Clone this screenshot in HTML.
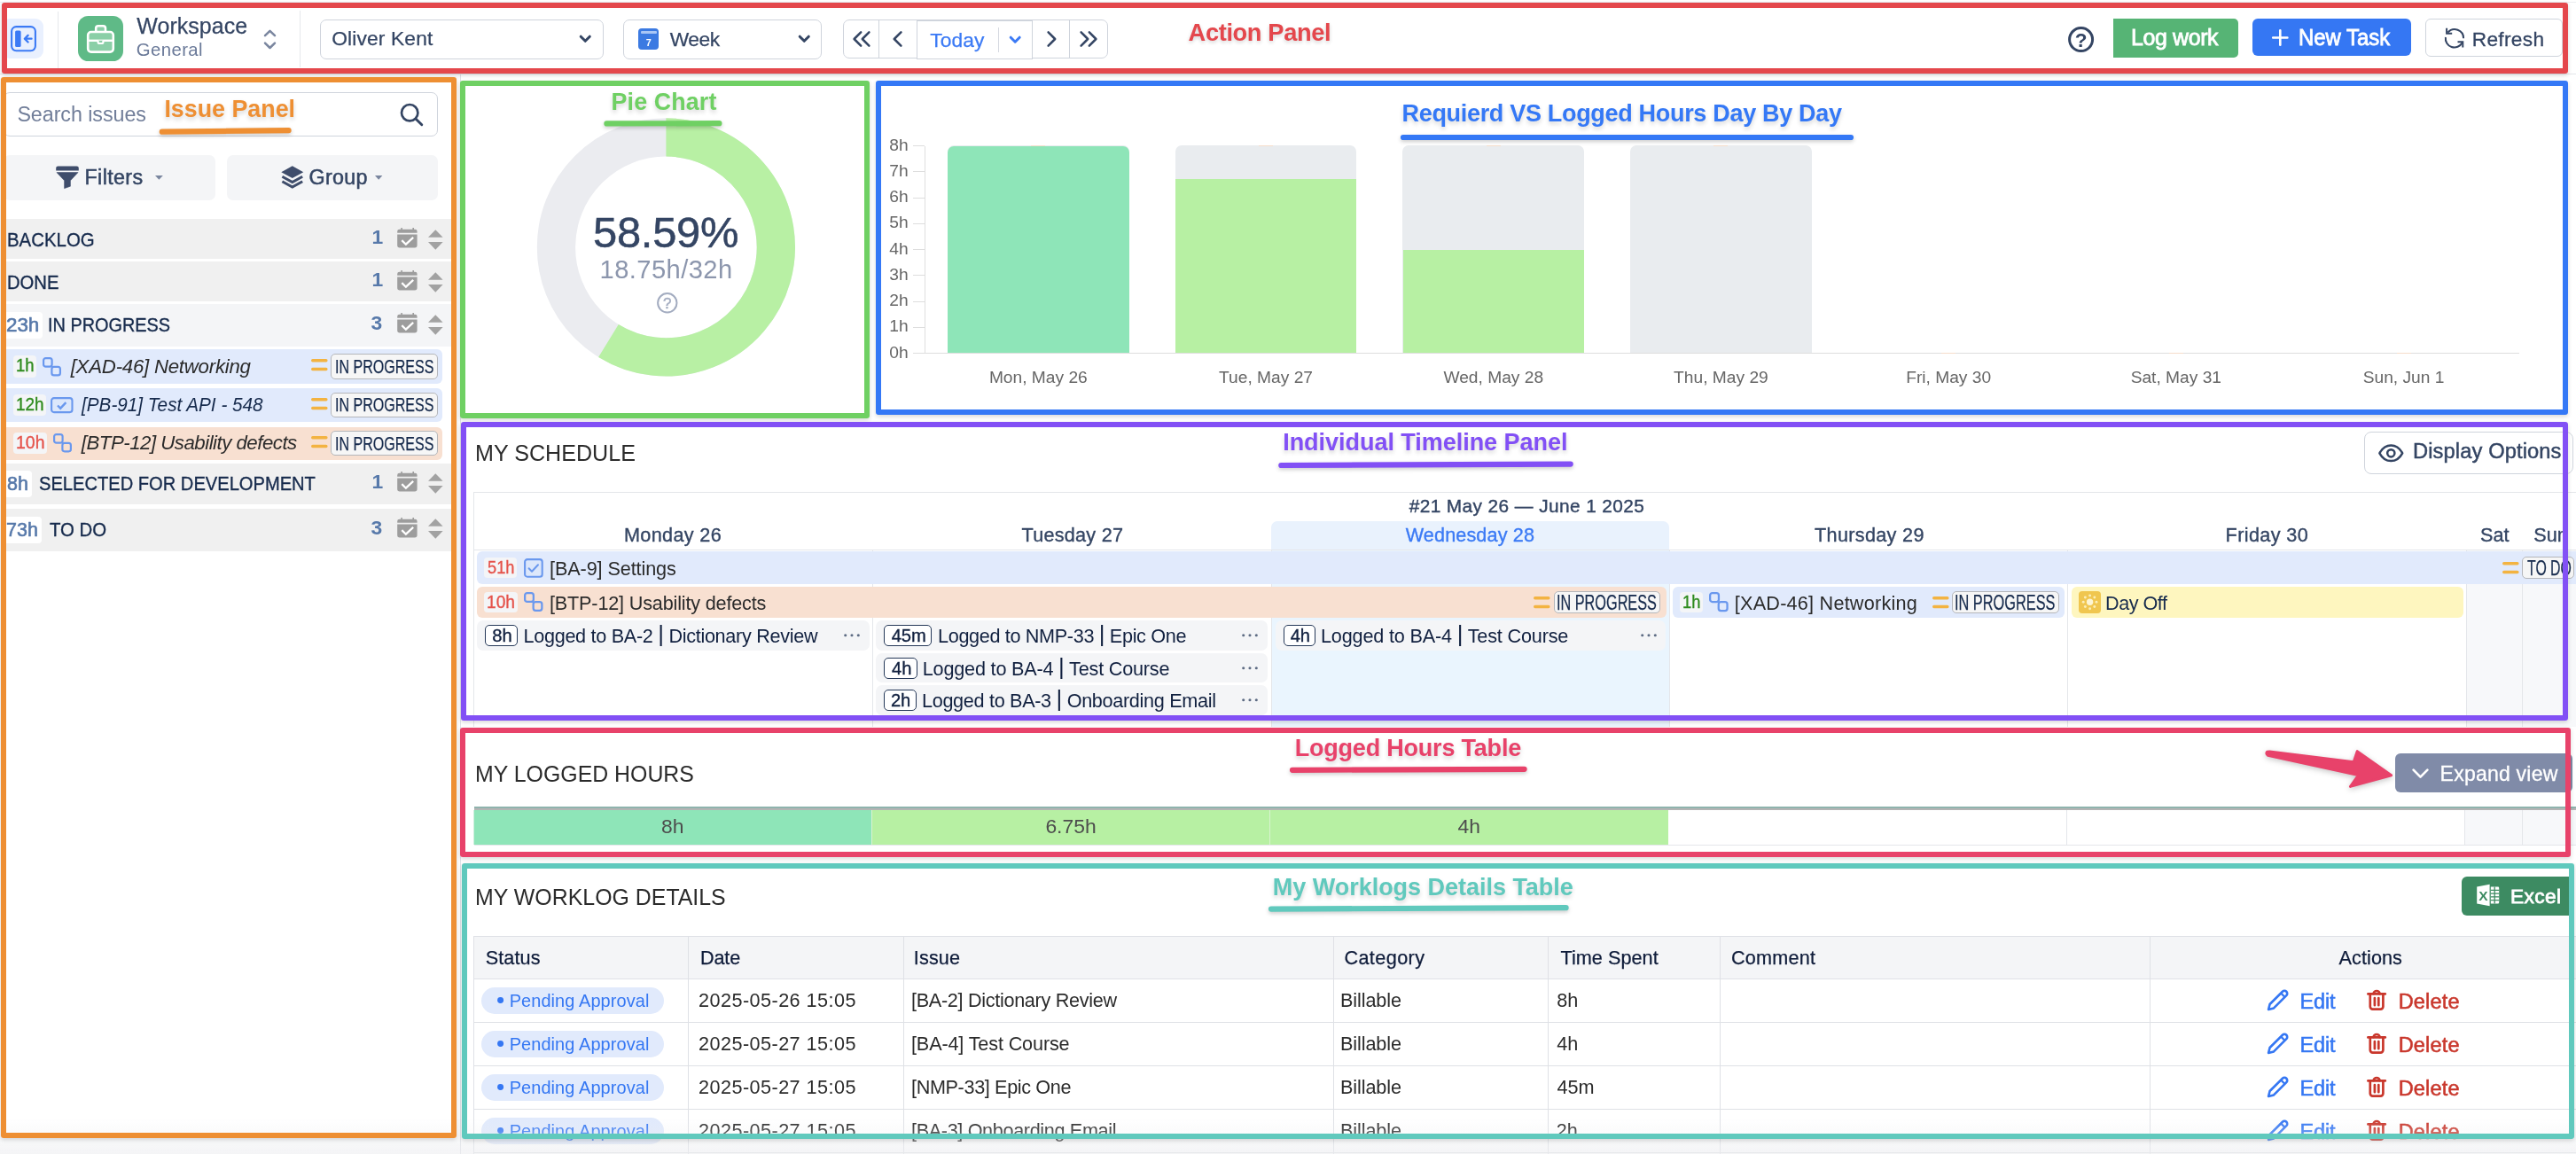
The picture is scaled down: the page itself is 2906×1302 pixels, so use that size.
<!DOCTYPE html>
<html lang="en"><head><meta charset="utf-8"><title>Workspace - Individual View</title>
<style>
html,body{margin:0;padding:0;background:#fff;}
body{width:2906px;height:1302px;position:relative;overflow:hidden;font-family:"Liberation Sans",sans-serif;}
.a{position:absolute;box-sizing:border-box;}
.t{position:absolute;white-space:pre;font-kerning:normal;}
.pp{font-size:1.2em;line-height:0;position:relative;top:-0.02em;}
svg{overflow:visible;}
svg text{font-family:"Liberation Sans",sans-serif;}
#pg{position:absolute;left:0;top:0;width:2906px;height:1302px;overflow:hidden;will-change:transform;}
</style></head><body><div id="pg">
<div class="a" style="left:0px;top:83px;width:2906px;height:1px;background:#e4e6ea;"></div>
<div class="a" style="left:519px;top:84px;width:1px;height:1218px;background:#e1e3e8;"></div>
<div class="a" style="left:0px;top:2px;width:2906px;height:1px;background:#eceef1;"></div>
<div class="a" style="left:2px;top:20.7px;width:46.9px;height:45px;background:#e9f0fe;border-radius:9px;"></div>
<svg class="a" style="left:12px;top:28.6px;" width="29" height="29.3" viewBox="0 0 29 29.3"><rect x="1.1" y="1.1" width="26.8" height="27.1" rx="5.2" fill="none" stroke="#3b7af5" stroke-width="2.1"/><rect x="5.1" y="5.4" width="6.5" height="18.6" rx="1.6" fill="#3b7af5"/><path d="M23.6 14.7H16.2M19.6 10.9l-3.8 3.8 3.8 3.8" stroke="#3b7af5" stroke-width="2.3" fill="none" stroke-linecap="round" stroke-linejoin="round"/></svg>
<div class="a" style="left:65px;top:13px;width:1px;height:64px;background:#e6e8ec;"></div>
<div class="a" style="left:87.9px;top:17.9px;width:51px;height:51px;background:#5fba87;border-radius:11.5px;"></div>
<svg class="a" style="left:87.9px;top:17.9px;" width="51" height="51" viewBox="0 0 51 51"><path d="M20.2 18v-4.2a2.6 2.6 0 0 1 2.6-2.6h5.6a2.6 2.6 0 0 1 2.6 2.6V18" fill="#8acfa7" stroke="#fff" stroke-width="2.6"/><rect x="11.2" y="18" width="28.6" height="22.6" rx="3.6" fill="#8acfa7" stroke="#fff" stroke-width="2.6"/><path d="M11.2 27.8h28.6" stroke="#fff" stroke-width="2.4"/><path d="M22.6 27.8v1.6a1.6 1.6 0 0 0 1.6 1.6h2.6a1.6 1.6 0 0 0 1.6-1.6v-1.6" fill="#8acfa7" stroke="#fff" stroke-width="2.2"/></svg>
<span class="t" style="left:154.3px;letter-spacing:0.066px;top:16.77px;font-size:24.96px;line-height:24.96px;color:#344563;-webkit-text-stroke:0.25px #344563;">Workspace</span>
<span class="t" style="left:153.7px;letter-spacing:0.415px;top:46.34px;font-size:20.38px;line-height:20.38px;color:#6b7a99;">General</span>
<svg class="a" style="left:297px;top:32px;" width="15" height="24" viewBox="0 0 15 24"><path d="M2 8.2L7.5 2.8 13 8.2M2 16.6l5.5 5.4 5.5-5.4" fill="none" stroke="#7a869f" stroke-width="2.5" stroke-linecap="round" stroke-linejoin="round"/></svg>
<div class="a" style="left:338px;top:12px;width:1px;height:64px;background:#e6e8ec;"></div>
<div class="a" style="left:361px;top:22.3px;width:319.6px;height:44.3px;background:#fff;border-radius:7px;border:1px solid #cfd4dc;"></div>
<span class="t" style="left:374.2px;letter-spacing:0.152px;top:32.32px;font-size:22.78px;line-height:22.78px;color:#344563;-webkit-text-stroke:0.25px #344563;">Oliver Kent</span>
<svg class="a" style="left:654.3px;top:40.2px;" width="12.5" height="7.5" viewBox="0 0 12.5 7.5"><path d="M1.2 1.2L6.25 6.3L11.3 1.2" fill="none" stroke="#344563" stroke-width="3" stroke-linecap="round" stroke-linejoin="round"/></svg>
<div class="a" style="left:703px;top:22.3px;width:223.5px;height:44.3px;background:#fff;border-radius:7px;border:1px solid #cfd4dc;"></div>
<div class="a" style="left:720px;top:31.8px;width:23.4px;height:23.9px;background:#3b7ae2;border-radius:4px;"></div>
<div class="a" style="left:722.6px;top:34.6px;width:18.2px;height:3.4px;background:#a9c6f5;border-radius:1px;"></div>
<span class="t" style="left:728.69px;top:43.24px;font-size:10.82px;line-height:10.82px;color:#fff;font-weight:700;">7</span>
<span class="t" style="left:755.8px;letter-spacing:-0.499px;top:33.12px;font-size:22.78px;line-height:22.78px;color:#344563;-webkit-text-stroke:0.25px #344563;">Week</span>
<svg class="a" style="left:900.5px;top:40.2px;" width="12.5" height="7.5" viewBox="0 0 12.5 7.5"><path d="M1.2 1.2L6.25 6.3L11.3 1.2" fill="none" stroke="#344563" stroke-width="3" stroke-linecap="round" stroke-linejoin="round"/></svg>
<div class="a" style="left:950.5px;top:22.3px;width:299.1px;height:44.2px;background:#fff;border-radius:7px;border:1px solid #cfd4dc;"></div>
<div class="a" style="left:1034px;top:22.8px;width:131px;height:44.7px;background:#fff;border:1px solid #cfd4dc;"></div>
<div class="a" style="left:991.2px;top:22.3px;width:1px;height:44.2px;background:#cfd4dc;"></div>
<div class="a" style="left:1206px;top:22.3px;width:1px;height:44.2px;background:#cfd4dc;"></div>
<svg class="a" style="left:962px;top:34.5px;" width="20" height="18" viewBox="0 0 20 18"><path d="M9.2 1.4L1.6 9l7.6 7.6M18.4 1.4L10.8 9l7.6 7.6" fill="none" stroke="#344563" stroke-width="2.5" stroke-linecap="round" stroke-linejoin="round"/></svg>
<svg class="a" style="left:1007px;top:34.5px;" width="11" height="18" viewBox="0 0 11 18"><path d="M9.4 1.4L1.8 9l7.6 7.6" fill="none" stroke="#344563" stroke-width="2.5" stroke-linecap="round" stroke-linejoin="round"/></svg>
<svg class="a" style="left:1180.5px;top:34.5px;" width="11" height="18" viewBox="0 0 11 18"><path d="M1.6 1.4L9.2 9l-7.6 7.6" fill="none" stroke="#344563" stroke-width="2.5" stroke-linecap="round" stroke-linejoin="round"/></svg>
<svg class="a" style="left:1217.6px;top:34.5px;" width="20" height="18" viewBox="0 0 20 18"><path d="M1.6 1.4L9.2 9l-7.6 7.6M10.8 1.4L18.4 9l-7.6 7.6" fill="none" stroke="#344563" stroke-width="2.5" stroke-linecap="round" stroke-linejoin="round"/></svg>
<span class="t" style="left:1049.2px;letter-spacing:0.109px;top:33.62px;font-size:22.78px;line-height:22.78px;color:#3b7af5;-webkit-text-stroke:0.25px #3b7af5;">Today</span>
<div class="a" style="left:1126px;top:30.5px;width:1px;height:28px;background:#d5d9e0;"></div>
<svg class="a" style="left:1138.8px;top:41.3px;" width="12.4" height="7.4" viewBox="0 0 12.4 7.4"><path d="M1.2 1.2L6.2 6.2L11.200000000000001 1.2" fill="none" stroke="#3b7af5" stroke-width="3" stroke-linecap="round" stroke-linejoin="round"/></svg>
<svg class="a" style="left:2333px;top:29.8px;" width="29.2" height="29.2" viewBox="0 0 29.2 29.2"><circle cx="14.6" cy="14.6" r="13" fill="none" stroke="#344563" stroke-width="3"/><text x="14.6" y="22.6" text-anchor="middle" font-size="22.5" font-weight="700" fill="#344563">?</text></svg>
<div class="a" style="left:2384.1px;top:20.9px;width:140.6px;height:43.7px;background:#56b475;border-radius:0 5px 5px 0;"></div>
<span class="t" style="left:2404px;letter-spacing:-0.382px;top:29.87px;font-size:24.96px;line-height:24.96px;color:#fff;-webkit-text-stroke:0.8px #fff;">Log work</span>
<div class="a" style="left:2541.1px;top:20.9px;width:178.6px;height:41.9px;background:#3577f3;border-radius:6px;"></div>
<svg class="a" style="left:2563px;top:33.4px;" width="18.6" height="19" viewBox="0 0 18.6 19"><path d="M9.3 1.2v16.6M1.2 9.5h16.2" stroke="#fff" stroke-width="2.6" stroke-linecap="round"/></svg>
<span class="t" style="left:2593.38px;transform-origin:0 50%;transform:scaleX(0.9589);top:29.87px;font-size:24.96px;line-height:24.96px;color:#fff;-webkit-text-stroke:0.8px #fff;">New Task</span>
<div class="a" style="left:2736.3px;top:20.9px;width:154.6px;height:43px;background:#fff;border-radius:6px;border:1px solid #cfd4dc;"></div>
<svg class="a" style="left:2757.7px;top:31.4px;" width="22.4" height="23" viewBox="0 0 22.4 23"><g fill="none" stroke="#344563" stroke-width="2" stroke-linejoin="miter"><path d="M3.4 5.7A10 10 0 0 1 21.1 12.2"/><path d="M0.9 11A10 10 0 0 0 19.6 17.2"/><path d="M2.1 0.7v6.1h6.1"/><path d="M14.5 16.3h5.800v6.2"/></g></svg>
<span class="t" style="left:2788.7px;letter-spacing:0.328px;top:32.81px;font-size:22.67px;line-height:22.67px;color:#344563;-webkit-text-stroke:0.3px #344563;">Refresh</span>
<span class="t" style="left:1340.6px;letter-spacing:-0.370px;top:23.23px;font-size:27.25px;line-height:27.25px;color:#e4474c;font-weight:700;text-shadow:0 2px 4px rgba(0,0,0,.18);">Action Panel</span>
<div class="a" style="left:4px;top:104.3px;width:489.8px;height:49.4px;background:#fff;border-radius:7px;border:1px solid #cfd4dc;"></div>
<span class="t" style="left:19.4px;letter-spacing:-0.064px;top:117.58px;font-size:23.3px;line-height:23.3px;color:#717e99;">Search issues</span>
<svg class="a" style="left:451px;top:115.8px;" width="26.5" height="26.5" viewBox="0 0 26.5 26.5"><circle cx="11.2" cy="11.2" r="9.2" fill="none" stroke="#344563" stroke-width="2.7"/><path d="M18.2 18.2l6.6 6.6" stroke="#344563" stroke-width="2.9" stroke-linecap="round"/></svg>
<div class="a" style="left:4px;top:175.1px;width:238.8px;height:50.5px;background:#f4f5f7;border-radius:7px;"></div>
<div class="a" style="left:256px;top:175.1px;width:238px;height:50.5px;background:#f4f5f7;border-radius:7px;"></div>
<svg class="a" style="left:63px;top:186.8px;" width="26" height="25.8" viewBox="0 0 26 25.8"><path d="M2.4 0.4h21.2a2.2 2.2 0 0 1 2.2 2.2v3H0.2v-3A2.2 2.2 0 0 1 2.4 0.4z" fill="#3f4d6b"/><path d="M1 7.6h24l-8.6 9.2v6.4l-6.8 2.4v-8.8z" fill="#3f4d6b" stroke="#3f4d6b" stroke-width="0.6" stroke-linejoin="round"/></svg>
<span class="t" style="left:95.5px;letter-spacing:0.372px;top:189.08px;font-size:23.3px;line-height:23.3px;color:#344563;-webkit-text-stroke:0.5px #344563;">Filters</span>
<svg class="a" style="left:175.2px;top:197.9px;" width="8.8" height="4.8" viewBox="0 0 8.8 4.8"><path d="M0 0h8.8L4.4 4.8z" fill="#7a869f"/></svg>
<svg class="a" style="left:316.5px;top:187.2px;" width="25.6" height="25.8" viewBox="0 0 25.6 25.8"><path d="M12.8 0.3L25.3 7.2 12.8 14.1 0.3 7.2z" fill="#3f4d6b"/><path d="M1.4 12.2l11.4 6.300 11.400-6.300M1.400 17.800l11.400 6.300 11.400-6.300" fill="none" stroke="#3f4d6b" stroke-width="3" stroke-linejoin="miter"/></svg>
<span class="t" style="left:348.6px;letter-spacing:0.252px;top:189.08px;font-size:23.3px;line-height:23.3px;color:#344563;-webkit-text-stroke:0.5px #344563;">Group</span>
<svg class="a" style="left:422.9px;top:197.9px;" width="8.4" height="4.8" viewBox="0 0 8.4 4.8"><path d="M0 0h8.4L4.2 4.8z" fill="#7a869f"/></svg>
<div class="a" style="left:4px;top:246.8px;width:505px;height:45px;background:#f0f0f0;"></div>
<span class="t" style="left:7.56px;transform-origin:0 50%;transform:scaleX(0.9432);top:259.73px;font-size:21.63px;line-height:21.63px;color:#172b4d;-webkit-text-stroke:0.35px #172b4d;">BACKLOG</span>
<span class="t" style="left:419.53px;top:256.4px;font-size:22.88px;line-height:22.88px;color:#5779aa;font-weight:700;">1</span>
<svg class="a" style="left:448.3px;top:257.4px;" width="22.8" height="22.6" viewBox="0 0 22.8 22.6"><rect x="4.3" y="0" width="1.6" height="3" fill="#9d9d9d"/><rect x="17.4" y="0" width="1.6" height="3" fill="#9d9d9d"/><path d="M2.6 1.7h17.6a2.4 2.4 0 0 1 2.4 2.4v1.6H0.2V4.1a2.4 2.4 0 0 1 2.4-2.4z" fill="#9d9d9d"/><path d="M0.2 7.500h22.4v12.300a2.700 2.700 0 0 1-2.700 2.700H2.900a2.700 2.700 0 0 1-2.700-2.700z" fill="#9d9d9d"/><path d="M5.300 14.100l4.600 4.600 8.300-7.800" fill="none" stroke="#fff" stroke-width="2.300" stroke-linecap="butt" stroke-linejoin="miter"/></svg>
<svg class="a" style="left:482.5px;top:259.2px;" width="16.6" height="23.1" viewBox="0 0 16.6 22.6"><path d="M8.3 0L16.6 8.6H0z" fill="#a2a2a2"/><path d="M0 13.8h16.6L8.3 22.6z" fill="#a2a2a2"/></svg>
<div class="a" style="left:4px;top:294.8px;width:505px;height:44.8px;background:#f0f0f0;"></div>
<span class="t" style="left:7.56px;transform-origin:0 50%;transform:scaleX(0.9352);top:307.63px;font-size:21.63px;line-height:21.63px;color:#172b4d;-webkit-text-stroke:0.35px #172b4d;">DONE</span>
<span class="t" style="left:419.53px;top:304.3px;font-size:22.88px;line-height:22.88px;color:#5779aa;font-weight:700;">1</span>
<svg class="a" style="left:448.3px;top:305.4px;" width="22.8" height="22.6" viewBox="0 0 22.8 22.6"><rect x="4.3" y="0" width="1.6" height="3" fill="#9d9d9d"/><rect x="17.4" y="0" width="1.6" height="3" fill="#9d9d9d"/><path d="M2.6 1.7h17.6a2.4 2.4 0 0 1 2.4 2.4v1.6H0.2V4.1a2.4 2.4 0 0 1 2.4-2.4z" fill="#9d9d9d"/><path d="M0.2 7.500h22.4v12.300a2.700 2.700 0 0 1-2.700 2.700H2.900a2.700 2.700 0 0 1-2.700-2.700z" fill="#9d9d9d"/><path d="M5.300 14.100l4.600 4.600 8.300-7.800" fill="none" stroke="#fff" stroke-width="2.300" stroke-linecap="butt" stroke-linejoin="miter"/></svg>
<svg class="a" style="left:482.5px;top:307.2px;" width="16.6" height="23.1" viewBox="0 0 16.6 22.6"><path d="M8.3 0L16.6 8.6H0z" fill="#a2a2a2"/><path d="M0 13.8h16.6L8.3 22.6z" fill="#a2a2a2"/></svg>
<div class="a" style="left:4px;top:343.2px;width:505px;height:48px;background:#f4f5f7;"></div>
<div class="a" style="left:4px;top:352.2px;width:44px;height:30px;background:#fff;border-radius:4px;"></div>
<span class="t" style="left:7.17px;transform-origin:0 50%;transform:scaleX(1.0337);top:356.33px;font-size:21.63px;line-height:21.63px;color:#5779aa;-webkit-text-stroke:0.6px #5779aa;">23h</span>
<span class="t" style="left:54.46px;transform-origin:0 50%;transform:scaleX(0.9196);top:356.43px;font-size:21.63px;line-height:21.63px;color:#172b4d;-webkit-text-stroke:0.35px #172b4d;">IN PROGRESS</span>
<span class="t" style="left:418.53px;top:353.1px;font-size:22.88px;line-height:22.88px;color:#5779aa;font-weight:700;">3</span>
<svg class="a" style="left:448.3px;top:352.8px;" width="22.8" height="22.6" viewBox="0 0 22.8 22.6"><rect x="4.3" y="0" width="1.6" height="3" fill="#9d9d9d"/><rect x="17.4" y="0" width="1.6" height="3" fill="#9d9d9d"/><path d="M2.6 1.7h17.6a2.4 2.4 0 0 1 2.4 2.4v1.6H0.2V4.1a2.4 2.4 0 0 1 2.4-2.4z" fill="#9d9d9d"/><path d="M0.2 7.500h22.4v12.300a2.700 2.700 0 0 1-2.700 2.700H2.900a2.700 2.700 0 0 1-2.700-2.700z" fill="#9d9d9d"/><path d="M5.300 14.100l4.600 4.600 8.300-7.800" fill="none" stroke="#fff" stroke-width="2.300" stroke-linecap="butt" stroke-linejoin="miter"/></svg>
<svg class="a" style="left:482.5px;top:354.6px;" width="16.6" height="23.1" viewBox="0 0 16.6 22.6"><path d="M8.3 0L16.6 8.6H0z" fill="#a2a2a2"/><path d="M0 13.8h16.6L8.3 22.6z" fill="#a2a2a2"/></svg>
<div class="a" style="left:4px;top:522.5px;width:505px;height:46.9px;background:#f0f0f0;"></div>
<div class="a" style="left:4px;top:530.95px;width:31.7px;height:30px;background:#fff;border-radius:4px;"></div>
<span class="t" style="left:8.2px;transform-origin:0 50%;transform:scaleX(0.9945);top:535.08px;font-size:21.63px;line-height:21.63px;color:#5779aa;-webkit-text-stroke:0.6px #5779aa;">8h</span>
<span class="t" style="left:44.3px;transform-origin:0 50%;transform:scaleX(0.9303);top:535.18px;font-size:21.63px;line-height:21.63px;color:#172b4d;-webkit-text-stroke:0.35px #172b4d;">SELECTED FOR DEVELOPMENT</span>
<span class="t" style="left:419.53px;top:531.85px;font-size:22.88px;line-height:22.88px;color:#5779aa;font-weight:700;">1</span>
<svg class="a" style="left:448.3px;top:532.1px;" width="22.8" height="22.6" viewBox="0 0 22.8 22.6"><rect x="4.3" y="0" width="1.6" height="3" fill="#9d9d9d"/><rect x="17.4" y="0" width="1.6" height="3" fill="#9d9d9d"/><path d="M2.6 1.7h17.6a2.4 2.4 0 0 1 2.4 2.4v1.6H0.2V4.1a2.4 2.4 0 0 1 2.4-2.4z" fill="#9d9d9d"/><path d="M0.2 7.500h22.4v12.300a2.700 2.700 0 0 1-2.700 2.700H2.900a2.700 2.700 0 0 1-2.700-2.700z" fill="#9d9d9d"/><path d="M5.300 14.100l4.600 4.600 8.300-7.800" fill="none" stroke="#fff" stroke-width="2.300" stroke-linecap="butt" stroke-linejoin="miter"/></svg>
<svg class="a" style="left:482.5px;top:533.9px;" width="16.6" height="23.1" viewBox="0 0 16.6 22.6"><path d="M8.3 0L16.6 8.6H0z" fill="#a2a2a2"/><path d="M0 13.8h16.6L8.3 22.6z" fill="#a2a2a2"/></svg>
<div class="a" style="left:4px;top:574px;width:505px;height:47.7px;background:#f0f0f0;"></div>
<div class="a" style="left:4px;top:582.85px;width:42.6px;height:30px;background:#fff;border-radius:4px;"></div>
<span class="t" style="left:7.21px;transform-origin:0 50%;transform:scaleX(0.9926);top:586.98px;font-size:21.63px;line-height:21.63px;color:#5779aa;-webkit-text-stroke:0.6px #5779aa;">73h</span>
<span class="t" style="left:55.8px;transform-origin:0 50%;transform:scaleX(0.9426);top:587.08px;font-size:21.63px;line-height:21.63px;color:#172b4d;-webkit-text-stroke:0.35px #172b4d;">TO DO</span>
<span class="t" style="left:418.53px;top:583.75px;font-size:22.88px;line-height:22.88px;color:#5779aa;font-weight:700;">3</span>
<svg class="a" style="left:448.3px;top:583.6px;" width="22.8" height="22.6" viewBox="0 0 22.8 22.6"><rect x="4.3" y="0" width="1.6" height="3" fill="#9d9d9d"/><rect x="17.4" y="0" width="1.6" height="3" fill="#9d9d9d"/><path d="M2.6 1.7h17.6a2.4 2.4 0 0 1 2.4 2.4v1.6H0.2V4.1a2.4 2.4 0 0 1 2.4-2.4z" fill="#9d9d9d"/><path d="M0.2 7.500h22.4v12.300a2.700 2.700 0 0 1-2.700 2.700H2.900a2.700 2.700 0 0 1-2.700-2.700z" fill="#9d9d9d"/><path d="M5.300 14.100l4.600 4.600 8.300-7.800" fill="none" stroke="#fff" stroke-width="2.300" stroke-linecap="butt" stroke-linejoin="miter"/></svg>
<svg class="a" style="left:482.5px;top:585.4px;" width="16.6" height="23.1" viewBox="0 0 16.6 22.6"><path d="M8.3 0L16.6 8.6H0z" fill="#a2a2a2"/><path d="M0 13.8h16.6L8.3 22.6z" fill="#a2a2a2"/></svg>
<div class="a" style="left:4px;top:394.1px;width:494.6px;height:38.7px;background:#e1eafc;border-radius:0 6px 6px 0;"></div>
<div class="a" style="left:15.1px;top:401.25px;width:25.9px;height:24.4px;background:#f4f5f7;border-radius:4px;"></div>
<span class="t" style="left:17.87px;transform-origin:0 50%;transform:scaleX(0.9255);top:403.42px;font-size:19.97px;line-height:19.97px;color:#2e8b1e;-webkit-text-stroke:0.35px #2e8b1e;">1h</span>
<svg class="a" style="left:47.9px;top:402.55px;" width="21.3" height="21.6" viewBox="0 0 21.3 21.6"><rect x="1.1" y="1.1" width="9.5" height="9.6" rx="2.5" fill="none" stroke="#6a98ee" stroke-width="2.2"/><rect x="10.4" y="10.8" width="9.5" height="9.600" rx="2.500" fill="none" stroke="#6a98ee" stroke-width="2.200"/></svg>
<span class="t" style="left:79.7px;letter-spacing:-0.248px;top:402.57px;font-size:22.26px;line-height:22.26px;color:#2b2b2b;font-style:italic;">[XAD-46] Networking</span>
<svg class="a" style="left:351.2px;top:405.45px;" width="18.6" height="13.2" viewBox="0 0 18.6 13.2"><path d="M1.7 1.7h15.2M1.7 11.5h15.2" stroke="#f3b341" stroke-width="3.4" stroke-linecap="round"/></svg>
<div class="a" style="left:373.4px;top:399.25px;width:120.9px;height:28.4px;background:#f6f6f6;border-radius:5px;border:1px solid #b4b6ba;"></div>
<span class="t" style="left:378.2px;transform-origin:0 50%;transform:scaleX(0.7017);top:402.15px;font-size:22.88px;line-height:22.88px;color:#172b4d;-webkit-text-stroke:0.25px #172b4d;">IN PROGRESS</span>
<div class="a" style="left:4px;top:437.7px;width:494.6px;height:38.1px;background:#e1eafc;border-radius:0 6px 6px 0;"></div>
<div class="a" style="left:15.1px;top:444.55px;width:36.9px;height:24.4px;background:#f4f5f7;border-radius:4px;"></div>
<span class="t" style="left:17.85px;transform-origin:0 50%;transform:scaleX(0.9489);top:446.72px;font-size:19.97px;line-height:19.97px;color:#2e8b1e;-webkit-text-stroke:0.35px #2e8b1e;">12h</span>
<svg class="a" style="left:57.1px;top:447.55px;" width="25.6" height="18.2" viewBox="0 0 25.6 18.2"><rect x="1.1" y="1.1" width="23.400000000000002" height="16.0" rx="2.8" fill="#dce7fb" stroke="#6a98ee" stroke-width="2.1"/><path d="M8.0 9.5l3.2 3.2 6.2-6.600" fill="none" stroke="#6a98ee" stroke-width="2.400" stroke-linecap="butt" stroke-linejoin="miter"/></svg>
<span class="t" style="left:91.73px;transform-origin:0 50%;transform:scaleX(0.9312);top:445.87px;font-size:22.26px;line-height:22.26px;color:#172b4d;font-style:italic;">[PB-91] Test API - 548</span>
<svg class="a" style="left:351.2px;top:448.75px;" width="18.6" height="13.2" viewBox="0 0 18.6 13.2"><path d="M1.7 1.7h15.2M1.7 11.5h15.2" stroke="#f3b341" stroke-width="3.4" stroke-linecap="round"/></svg>
<div class="a" style="left:373.4px;top:442.55px;width:120.9px;height:28.4px;background:#f6f6f6;border-radius:5px;border:1px solid #b4b6ba;"></div>
<span class="t" style="left:378.2px;transform-origin:0 50%;transform:scaleX(0.7017);top:445.45px;font-size:22.88px;line-height:22.88px;color:#172b4d;-webkit-text-stroke:0.25px #172b4d;">IN PROGRESS</span>
<div class="a" style="left:4px;top:481.5px;width:494.6px;height:37.1px;background:#f8e0d1;border-radius:0 6px 6px 0;"></div>
<div class="a" style="left:15.1px;top:487.85px;width:37.8px;height:24.4px;background:#f4f5f7;border-radius:4px;"></div>
<span class="t" style="left:17.82px;transform-origin:0 50%;transform:scaleX(0.9778);top:490.02px;font-size:19.97px;line-height:19.97px;color:#e5534b;-webkit-text-stroke:0.35px #e5534b;">10h</span>
<svg class="a" style="left:60px;top:489.15px;" width="21.3" height="21.6" viewBox="0 0 21.3 21.6"><rect x="1.1" y="1.1" width="9.5" height="9.6" rx="2.5" fill="none" stroke="#6a98ee" stroke-width="2.2"/><rect x="10.4" y="10.8" width="9.5" height="9.600" rx="2.500" fill="none" stroke="#6a98ee" stroke-width="2.200"/></svg>
<span class="t" style="left:91.8px;letter-spacing:-0.502px;top:489.17px;font-size:22.26px;line-height:22.26px;color:#2b2b2b;font-style:italic;">[BTP-12] Usability defects</span>
<svg class="a" style="left:351.2px;top:492.05px;" width="18.6" height="13.2" viewBox="0 0 18.6 13.2"><path d="M1.7 1.7h15.2M1.7 11.5h15.2" stroke="#f3b341" stroke-width="3.4" stroke-linecap="round"/></svg>
<div class="a" style="left:373.4px;top:485.85px;width:120.9px;height:28.4px;background:#f6f6f6;border-radius:5px;border:1px solid #b4b6ba;"></div>
<span class="t" style="left:378.2px;transform-origin:0 50%;transform:scaleX(0.7017);top:488.75px;font-size:22.88px;line-height:22.88px;color:#172b4d;-webkit-text-stroke:0.25px #172b4d;">IN PROGRESS</span>
<svg class="a" style="left:0px;top:0px;pointer-events:none;" width="2906" height="1302" viewBox="0 0 2906 1302"><circle cx="751.4" cy="278.9" r="123.94999999999999" fill="none" stroke="#ebecf0" stroke-width="43.3"/><path d="M751.4 154.95A123.94999999999999 123.94999999999999 0 1 1 686.44 384.46" fill="none" stroke="#b8f0a4" stroke-width="43.3"/></svg>
<span class="t" style="left:669px;letter-spacing:-0.261px;top:237.52px;font-size:48.88px;line-height:48.88px;color:#344563;-webkit-text-stroke:0.5px #344563;">58.59%</span>
<span class="t" style="left:676.6px;letter-spacing:0.433px;top:290.35px;font-size:29.12px;line-height:29.12px;color:#8c96ad;">18.75h/32h</span>
<svg class="a" style="left:741.2px;top:330.2px;" width="23.6" height="23.6" viewBox="0 0 23.6 23.6"><circle cx="11.8" cy="11.8" r="10.7" fill="none" stroke="#a3acc0" stroke-width="2"/><text x="11.8" y="17.8" text-anchor="middle" font-size="17" font-weight="400" fill="#a3acc0" stroke="#a3acc0" stroke-width="0.5">?</text></svg>
<div class="a" style="left:1042.5px;top:164.6px;width:1px;height:234px;background:#dedede;"></div>
<div class="a" style="left:1030px;top:398px;width:1811.7px;height:1.2px;background:#dedede;"></div>
<div class="a" style="left:1030px;top:398.1px;width:13px;height:1px;background:#dedede;"></div>
<span class="t" style="left:1003.26px;top:387.55px;font-size:19.2px;line-height:19.2px;color:#666;">0h</span>
<div class="a" style="left:1030px;top:368.85px;width:13px;height:1px;background:#dedede;"></div>
<span class="t" style="left:1003.26px;top:358.3px;font-size:19.2px;line-height:19.2px;color:#666;">1h</span>
<div class="a" style="left:1030px;top:339.6px;width:13px;height:1px;background:#dedede;"></div>
<span class="t" style="left:1003.26px;top:329.05px;font-size:19.2px;line-height:19.2px;color:#666;">2h</span>
<div class="a" style="left:1030px;top:310.35px;width:13px;height:1px;background:#dedede;"></div>
<span class="t" style="left:1003.26px;top:299.8px;font-size:19.2px;line-height:19.2px;color:#666;">3h</span>
<div class="a" style="left:1030px;top:281.1px;width:13px;height:1px;background:#dedede;"></div>
<span class="t" style="left:1003.26px;top:270.55px;font-size:19.2px;line-height:19.2px;color:#666;">4h</span>
<div class="a" style="left:1030px;top:251.85px;width:13px;height:1px;background:#dedede;"></div>
<span class="t" style="left:1003.26px;top:241.3px;font-size:19.2px;line-height:19.2px;color:#666;">5h</span>
<div class="a" style="left:1030px;top:222.6px;width:13px;height:1px;background:#dedede;"></div>
<span class="t" style="left:1003.26px;top:212.05px;font-size:19.2px;line-height:19.2px;color:#666;">6h</span>
<div class="a" style="left:1030px;top:193.35px;width:13px;height:1px;background:#dedede;"></div>
<span class="t" style="left:1003.26px;top:182.8px;font-size:19.2px;line-height:19.2px;color:#666;">7h</span>
<div class="a" style="left:1030px;top:164.1px;width:13px;height:1px;background:#dedede;"></div>
<span class="t" style="left:1003.26px;top:153.55px;font-size:19.2px;line-height:19.2px;color:#666;">8h</span>
<div class="a" style="left:1068.8px;top:164.2px;width:204.8px;height:233.8px;background:#e9ecef;border-radius:7px 7px 0 0;"></div>
<div class="a" style="left:1068.8px;top:164.8px;width:204.8px;height:233.2px;background:#8ee5b8;border-radius:7px 7px 0 0;"></div>
<div class="a" style="left:1325.5px;top:164.2px;width:204.8px;height:233.8px;background:#e9ecef;border-radius:7px 7px 0 0;"></div>
<div class="a" style="left:1325.9px;top:202px;width:204px;height:196px;background:#b7f0a3;"></div>
<div class="a" style="left:1582.2px;top:164.2px;width:204.8px;height:233.8px;background:#e9ecef;border-radius:7px 7px 0 0;"></div>
<div class="a" style="left:1582.6px;top:282.4px;width:204px;height:115.6px;background:#b7f0a3;"></div>
<div class="a" style="left:1838.9px;top:164.2px;width:204.8px;height:233.8px;background:#e9ecef;border-radius:7px 7px 0 0;"></div>
<div class="a" style="left:1163.35px;top:163.6px;width:16px;height:1px;background:#f6ddcb;"></div>
<div class="a" style="left:1420.05px;top:163.6px;width:16px;height:1px;background:#f6ddcb;"></div>
<div class="a" style="left:1676.75px;top:163.6px;width:16px;height:1px;background:#f6ddcb;"></div>
<div class="a" style="left:1933.45px;top:163.6px;width:16px;height:1px;background:#f6ddcb;"></div>
<div class="a" style="left:2190.15px;top:397.6px;width:16px;height:1px;background:#f6ddcb;"></div>
<div class="a" style="left:2446.85px;top:397.6px;width:16px;height:1px;background:#f6ddcb;"></div>
<div class="a" style="left:2703.55px;top:397.6px;width:16px;height:1px;background:#f6ddcb;"></div>
<span class="t" style="left:1115.89px;top:415.75px;font-size:19.2px;line-height:19.2px;color:#666;">Mon, May 26</span>
<span class="t" style="left:1375.08px;top:415.75px;font-size:19.2px;line-height:19.2px;color:#666;">Tue, May 27</span>
<span class="t" style="left:1628.4px;top:415.75px;font-size:19.2px;line-height:19.2px;color:#666;">Wed, May 28</span>
<span class="t" style="left:1888.12px;top:415.75px;font-size:19.2px;line-height:19.2px;color:#666;">Thu, May 29</span>
<span class="t" style="left:2150.17px;top:415.75px;font-size:19.2px;line-height:19.2px;color:#666;">Fri, May 30</span>
<span class="t" style="left:2403.65px;top:415.75px;font-size:19.2px;line-height:19.2px;color:#666;">Sat, May 31</span>
<span class="t" style="left:2665.68px;top:415.75px;font-size:19.2px;line-height:19.2px;color:#666;">Sun, Jun 1</span>
<span class="t" style="left:535.81px;transform-origin:0 50%;transform:scaleX(0.9437);top:498.36px;font-size:26.62px;line-height:26.62px;color:#2b2b2b;">MY SCHEDULE</span>
<div class="a" style="left:2667.4px;top:487.2px;width:235.6px;height:47.7px;background:#fff;border-radius:8px;border:1px solid #cfd4dc;"></div>
<svg class="a" style="left:2682.6px;top:500.6px;" width="28.6" height="20.6" viewBox="0 0 28.6 20.6"><path d="M1.4 10.3C4.6 4.4 9 1.5 14.3 1.5s9.7 2.9 12.9 8.8c-3.2 5.9-7.600 8.800-12.900 8.800S4.600 16.200 1.400 10.300z" fill="none" stroke="#344563" stroke-width="2.5" stroke-linejoin="round"/><circle cx="14.3" cy="10.3" r="4.1" fill="none" stroke="#344563" stroke-width="2.5"/></svg>
<span class="t" style="left:2722px;letter-spacing:0.104px;top:498.33px;font-size:23.71px;line-height:23.71px;color:#344563;-webkit-text-stroke:0.45px #344563;">Display Options</span>
<div class="a" style="left:2782.4px;top:621px;width:123.6px;height:199px;background:#f7f8fa;"></div>
<div class="a" style="left:2780.1px;top:913.8px;width:125.9px;height:39.7px;background:#f7f8fa;"></div>
<div class="a" style="left:1434px;top:588px;width:449.2px;height:33px;background:#e9f2fd;border-radius:7px 7px 0 0;"></div>
<div class="a" style="left:1434px;top:621px;width:449.2px;height:199px;background:#eaf5fe;"></div>
<div class="a" style="left:534.1px;top:555px;width:2371.9px;height:1px;background:#e4e6ea;"></div>
<div class="a" style="left:534.1px;top:555px;width:1px;height:265px;background:#e4e6ea;"></div>
<div class="a" style="left:534.1px;top:620.3px;width:2371.9px;height:1px;background:#e4e6ea;"></div>
<div class="a" style="left:984.3px;top:621px;width:1px;height:199px;background:#e4e6ea;"></div>
<div class="a" style="left:1433.5px;top:621px;width:1px;height:199px;background:#e4e6ea;"></div>
<div class="a" style="left:1882.7px;top:621px;width:1px;height:199px;background:#e4e6ea;"></div>
<div class="a" style="left:2332.1px;top:621px;width:1px;height:199px;background:#e4e6ea;"></div>
<div class="a" style="left:2781.9px;top:621px;width:1px;height:199px;background:#e4e6ea;"></div>
<div class="a" style="left:2845.1px;top:621px;width:1px;height:199px;background:#e4e6ea;"></div>
<span class="t" style="left:1589.7px;letter-spacing:0.420px;top:561.05px;font-size:20.8px;line-height:20.8px;color:#344563;-webkit-text-stroke:0.4px #344563;">#21 May 26 — June 1 2025</span>
<span class="t" style="left:704px;letter-spacing:0.341px;top:593.03px;font-size:21.63px;line-height:21.63px;color:#344563;-webkit-text-stroke:0.35px #344563;">Monday 26</span>
<span class="t" style="left:1152.5px;letter-spacing:0.258px;top:593.03px;font-size:21.63px;line-height:21.63px;color:#344563;-webkit-text-stroke:0.35px #344563;">Tuesday 27</span>
<span class="t" style="left:1585.7px;letter-spacing:0.124px;top:593.03px;font-size:21.63px;line-height:21.63px;color:#3b7af5;-webkit-text-stroke:0.35px #3b7af5;">Wednesday 28</span>
<span class="t" style="left:2047px;letter-spacing:0.322px;top:593.03px;font-size:21.63px;line-height:21.63px;color:#344563;-webkit-text-stroke:0.35px #344563;">Thursday 29</span>
<span class="t" style="left:2510.6px;letter-spacing:0.373px;top:593.03px;font-size:21.63px;line-height:21.63px;color:#344563;-webkit-text-stroke:0.35px #344563;">Friday 30</span>
<span class="t" style="left:2798.02px;top:593.03px;font-size:21.63px;line-height:21.63px;color:#344563;-webkit-text-stroke:0.35px #344563;">Sat</span>
<span class="t" style="left:2858.37px;top:593.03px;font-size:21.63px;line-height:21.63px;color:#344563;-webkit-text-stroke:0.35px #344563;">Sun</span>
<div class="a" style="left:538px;top:622.4px;width:2368px;height:36.4px;background:#e1eafc;border-radius:6px 0 0 6px;"></div>
<div class="a" style="left:545.7px;top:629px;width:37.3px;height:23.2px;background:#f4f5f7;border-radius:4px;"></div>
<span class="t" style="left:550px;transform-origin:0 50%;transform:scaleX(0.9132);top:630.57px;font-size:19.97px;line-height:19.97px;color:#e5534b;-webkit-text-stroke:0.35px #e5534b;">51h</span>
<svg class="a" style="left:590.6px;top:629.7px;" width="21.8" height="21.8" viewBox="0 0 21.8 21.8"><rect x="1.1" y="1.1" width="19.6" height="19.6" rx="2.8" fill="#dce7fb" stroke="#6a98ee" stroke-width="2.1"/><path d="M5.6 11.3l3.4 3.5 7-7.6" fill="none" stroke="#6a98ee" stroke-width="2" stroke-linecap="round" stroke-linejoin="round"/></svg>
<span class="t" style="left:620px;letter-spacing:-0.102px;top:631.23px;font-size:21.63px;line-height:21.63px;color:#2b2b2b;">[BA-9] Settings</span>
<svg class="a" style="left:2822.6px;top:634.4px;" width="18.6" height="13.2" viewBox="0 0 18.6 13.2"><path d="M1.7 1.7h15.2M1.7 11.5h15.2" stroke="#f3b341" stroke-width="3.4" stroke-linecap="round"/></svg>
<div class="a" style="left:2845.4px;top:628.2px;width:58.2px;height:24.8px;background:#f6f6f6;border-radius:5px;border:1px solid #b4b6ba;"></div>
<span class="t" style="left:2850.5px;transform-origin:0 50%;transform:scaleX(0.6629);top:628.78px;font-size:23.92px;line-height:23.92px;color:#172b4d;-webkit-text-stroke:0.25px #172b4d;">TO DO</span>
<div class="a" style="left:538px;top:662.2px;width:1341.8px;height:34.7px;background:#f8e0d1;border-radius:6px;"></div>
<div class="a" style="left:545.7px;top:667.95px;width:38.1px;height:23.2px;background:#f4f5f7;border-radius:4px;"></div>
<span class="t" style="left:549.04px;transform-origin:0 50%;transform:scaleX(0.9617);top:669.52px;font-size:19.97px;line-height:19.97px;color:#e5534b;-webkit-text-stroke:0.35px #e5534b;">10h</span>
<svg class="a" style="left:591.2px;top:668.35px;" width="21.8" height="22.11" viewBox="0 0 21.3 21.6"><rect x="1.1" y="1.1" width="9.5" height="9.6" rx="2.5" fill="none" stroke="#6a98ee" stroke-width="2.2"/><rect x="10.4" y="10.8" width="9.5" height="9.600" rx="2.500" fill="none" stroke="#6a98ee" stroke-width="2.200"/></svg>
<span class="t" style="left:620px;letter-spacing:-0.175px;top:670.18px;font-size:21.63px;line-height:21.63px;color:#2b2b2b;">[BTP-12] Usability defects</span>
<svg class="a" style="left:1730.4px;top:673.15px;" width="18.6" height="13.2" viewBox="0 0 18.6 13.2"><path d="M1.7 1.7h15.2M1.7 11.5h15.2" stroke="#f3b341" stroke-width="3.4" stroke-linecap="round"/></svg>
<div class="a" style="left:1753.3px;top:667.25px;width:119.4px;height:24.6px;background:#f6f6f6;border-radius:5px;border:1px solid #b4b6ba;"></div>
<span class="t" style="left:1755.94px;transform-origin:0 50%;transform:scaleX(0.6799);top:667.73px;font-size:23.92px;line-height:23.92px;color:#172b4d;-webkit-text-stroke:0.25px #172b4d;">IN PROGRESS</span>
<div class="a" style="left:1887.2px;top:662.2px;width:441.8px;height:34.7px;background:#e1eafc;border-radius:6px;"></div>
<div class="a" style="left:1894.9px;top:667.95px;width:26px;height:23.2px;background:#f4f5f7;border-radius:4px;"></div>
<span class="t" style="left:1897.68px;transform-origin:0 50%;transform:scaleX(0.9156);top:669.52px;font-size:19.97px;line-height:19.97px;color:#2e8b1e;-webkit-text-stroke:0.35px #2e8b1e;">1h</span>
<svg class="a" style="left:1928.2px;top:668.15px;" width="22" height="22.31" viewBox="0 0 21.3 21.6"><rect x="1.1" y="1.1" width="9.5" height="9.6" rx="2.5" fill="none" stroke="#6a98ee" stroke-width="2.2"/><rect x="10.4" y="10.8" width="9.5" height="9.600" rx="2.500" fill="none" stroke="#6a98ee" stroke-width="2.200"/></svg>
<span class="t" style="left:1956.8px;letter-spacing:0.223px;top:670.18px;font-size:21.63px;line-height:21.63px;color:#2b2b2b;">[XAD-46] Networking</span>
<svg class="a" style="left:2179.7px;top:673.15px;" width="18.6" height="13.2" viewBox="0 0 18.6 13.2"><path d="M1.7 1.7h15.2M1.7 11.5h15.2" stroke="#f3b341" stroke-width="3.4" stroke-linecap="round"/></svg>
<div class="a" style="left:2202.3px;top:667.25px;width:120.4px;height:24.6px;background:#f6f6f6;border-radius:5px;border:1px solid #b4b6ba;"></div>
<span class="t" style="left:2204.93px;transform-origin:0 50%;transform:scaleX(0.6830);top:667.73px;font-size:23.92px;line-height:23.92px;color:#172b4d;-webkit-text-stroke:0.25px #172b4d;">IN PROGRESS</span>
<div class="a" style="left:2337px;top:662.2px;width:442px;height:34.7px;background:#fef6bf;border-radius:6px;"></div>
<div class="a" style="left:2344.7px;top:667.25px;width:25.2px;height:24.6px;background:#f0c64f;border-radius:4px;"></div>
<svg class="a" style="left:2344.7px;top:667.25px;" width="25.2" height="24.6" viewBox="0 0 25.2 24.6"><circle cx="12.6" cy="12.3" r="3.7" fill="#fdf5d4"/><circle cx="20.00" cy="12.30" r="1.45" fill="#fbeeb8"/><circle cx="17.83" cy="17.53" r="1.45" fill="#fbeeb8"/><circle cx="12.60" cy="19.70" r="1.45" fill="#fbeeb8"/><circle cx="7.37" cy="17.53" r="1.45" fill="#fbeeb8"/><circle cx="5.20" cy="12.30" r="1.45" fill="#fbeeb8"/><circle cx="7.37" cy="7.07" r="1.45" fill="#fbeeb8"/><circle cx="12.60" cy="4.90" r="1.45" fill="#fbeeb8"/><circle cx="17.83" cy="7.07" r="1.45" fill="#fbeeb8"/></svg>
<span class="t" style="left:2375px;letter-spacing:-0.484px;top:670.18px;font-size:21.63px;line-height:21.63px;color:#172b4d;">Day Off</span>
<div class="a" style="left:538px;top:700.2px;width:443px;height:33.7px;background:#f4f5f7;border-radius:7px;"></div>
<div class="a" style="left:547px;top:704.85px;width:36.8px;height:24.4px;background:#fff;border-radius:5px;border:1.3px solid #253858;"></div>
<span class="t" style="left:555.29px;top:707.21px;font-size:20.18px;line-height:20.18px;color:#11203f;-webkit-text-stroke:0.35px #11203f;">8h</span>
<span class="t" style="left:590.5px;letter-spacing:-0.305px;top:706.98px;font-size:21.63px;line-height:21.63px;color:#11203f;">Logged to BA-2 <span class="pp">|</span> Dictionary Review</span>
<svg class="a" style="left:951.7px;top:715.35px;" width="18" height="3.4" viewBox="0 0 18 3.4"><circle cx="1.7" cy="1.7" r="1.55" fill="#5e6c84"/><circle cx="9" cy="1.7" r="1.55" fill="#5e6c84"/><circle cx="16.3" cy="1.7" r="1.55" fill="#5e6c84"/></svg>
<div class="a" style="left:988.4px;top:700.2px;width:441.2px;height:33.7px;background:#f4f5f7;border-radius:7px;"></div>
<div class="a" style="left:997.4px;top:704.85px;width:53.9px;height:24.4px;background:#fff;border-radius:5px;border:1.3px solid #253858;"></div>
<span class="t" style="left:1005.63px;top:707.21px;font-size:20.18px;line-height:20.18px;color:#11203f;-webkit-text-stroke:0.35px #11203f;">45m</span>
<span class="t" style="left:1058px;letter-spacing:-0.338px;top:706.98px;font-size:21.63px;line-height:21.63px;color:#11203f;">Logged to NMP-33 <span class="pp">|</span> Epic One</span>
<svg class="a" style="left:1400.9px;top:715.35px;" width="18" height="3.4" viewBox="0 0 18 3.4"><circle cx="1.7" cy="1.7" r="1.55" fill="#5e6c84"/><circle cx="9" cy="1.7" r="1.55" fill="#5e6c84"/><circle cx="16.3" cy="1.7" r="1.55" fill="#5e6c84"/></svg>
<div class="a" style="left:988.4px;top:737.4px;width:441.2px;height:33px;background:#f4f5f7;border-radius:7px;"></div>
<div class="a" style="left:997.4px;top:741.7px;width:37.3px;height:24.4px;background:#fff;border-radius:5px;border:1.3px solid #253858;"></div>
<span class="t" style="left:1005.94px;top:744.06px;font-size:20.18px;line-height:20.18px;color:#11203f;-webkit-text-stroke:0.35px #11203f;">4h</span>
<span class="t" style="left:1040.8px;letter-spacing:-0.199px;top:743.83px;font-size:21.63px;line-height:21.63px;color:#11203f;">Logged to BA-4 <span class="pp">|</span> Test Course</span>
<svg class="a" style="left:1400.9px;top:752.2px;" width="18" height="3.4" viewBox="0 0 18 3.4"><circle cx="1.7" cy="1.7" r="1.55" fill="#5e6c84"/><circle cx="9" cy="1.7" r="1.55" fill="#5e6c84"/><circle cx="16.3" cy="1.7" r="1.55" fill="#5e6c84"/></svg>
<div class="a" style="left:988.4px;top:773.4px;width:441.2px;height:33.2px;background:#f4f5f7;border-radius:7px;"></div>
<div class="a" style="left:997.4px;top:777.8px;width:36.2px;height:24.4px;background:#fff;border-radius:5px;border:1.3px solid #253858;"></div>
<span class="t" style="left:1004.89px;top:780.16px;font-size:20.18px;line-height:20.18px;color:#11203f;-webkit-text-stroke:0.35px #11203f;">2h</span>
<span class="t" style="left:1040px;letter-spacing:-0.319px;top:779.93px;font-size:21.63px;line-height:21.63px;color:#11203f;">Logged to BA-3 <span class="pp">|</span> Onboarding Email</span>
<svg class="a" style="left:1400.9px;top:788.3px;" width="18" height="3.4" viewBox="0 0 18 3.4"><circle cx="1.7" cy="1.7" r="1.55" fill="#5e6c84"/><circle cx="9" cy="1.7" r="1.55" fill="#5e6c84"/><circle cx="16.3" cy="1.7" r="1.55" fill="#5e6c84"/></svg>
<div class="a" style="left:1438.8px;top:700.2px;width:440.2px;height:33.7px;background:#f4f5f7;border-radius:7px;"></div>
<div class="a" style="left:1447.8px;top:704.85px;width:35.9px;height:24.4px;background:#fff;border-radius:5px;border:1.3px solid #253858;"></div>
<span class="t" style="left:1455.64px;top:707.21px;font-size:20.18px;line-height:20.18px;color:#11203f;-webkit-text-stroke:0.35px #11203f;">4h</span>
<span class="t" style="left:1490px;letter-spacing:-0.173px;top:706.98px;font-size:21.63px;line-height:21.63px;color:#11203f;">Logged to BA-4 <span class="pp">|</span> Test Course</span>
<svg class="a" style="left:1850.8px;top:715.35px;" width="18" height="3.4" viewBox="0 0 18 3.4"><circle cx="1.7" cy="1.7" r="1.55" fill="#5e6c84"/><circle cx="9" cy="1.7" r="1.55" fill="#5e6c84"/><circle cx="16.3" cy="1.7" r="1.55" fill="#5e6c84"/></svg>
<span class="t" style="left:535.83px;transform-origin:0 50%;transform:scaleX(0.9347);top:860.46px;font-size:26.62px;line-height:26.62px;color:#2b2b2b;">MY LOGGED HOURS</span>
<div class="a" style="left:2702.2px;top:850px;width:199.8px;height:43.5px;background:#808ba8;border-radius:6px;"></div>
<svg class="a" style="left:2721.4px;top:866.8px;" width="19" height="11.4" viewBox="0 0 19 11.4"><path d="M1.6 1.6l7.9 8 7.9-8" fill="none" stroke="#fff" stroke-width="2.7" stroke-linecap="round" stroke-linejoin="round"/></svg>
<span class="t" style="left:2752.6px;letter-spacing:0.192px;top:861.66px;font-size:23.09px;line-height:23.09px;color:#fff;-webkit-text-stroke:0.3px #fff;">Expand view</span>
<div class="a" style="left:534.9px;top:910px;width:2371.1px;height:1.9px;background:#8fb3ad;"></div>
<div class="a" style="left:534.9px;top:911.9px;width:2371.1px;height:1.9px;background:#b4b4b4;"></div>
<div class="a" style="left:534.9px;top:913.8px;width:448.7px;height:39.6px;background:#8ee5b8;"></div>
<div class="a" style="left:983.6px;top:913.8px;width:449px;height:39.6px;background:#b7f0a3;"></div>
<div class="a" style="left:1432.6px;top:913.8px;width:449px;height:39.6px;background:#b7f0a3;"></div>
<div class="a" style="left:983.2px;top:913.8px;width:0.8px;height:39.6px;background:#d8f3cf;"></div>
<div class="a" style="left:1432.2px;top:913.8px;width:0.8px;height:39.6px;background:#d8f3cf;"></div>
<div class="a" style="left:534.9px;top:953.2px;width:2371.1px;height:1px;background:#e4e6ea;"></div>
<div class="a" style="left:2330.5px;top:913.8px;width:1px;height:39.6px;background:#e4e6ea;"></div>
<div class="a" style="left:2779.6px;top:913.8px;width:1px;height:39.6px;background:#e4e6ea;"></div>
<div class="a" style="left:2845px;top:913.8px;width:1px;height:39.6px;background:#e4e6ea;"></div>
<div class="a" style="left:534.4px;top:913.8px;width:1px;height:39.6px;background:#cfeedd;"></div>
<span class="t" style="left:746.07px;top:920.7px;font-size:22.88px;line-height:22.88px;color:#4d4d4d;">8h</span>
<span class="t" style="left:1179.38px;top:920.7px;font-size:22.88px;line-height:22.88px;color:#4d4d4d;">6.75h</span>
<span class="t" style="left:1644.47px;top:920.7px;font-size:22.88px;line-height:22.88px;color:#4d4d4d;">4h</span>
<span class="t" style="left:535.83px;transform-origin:0 50%;transform:scaleX(0.9358);top:999.06px;font-size:26.62px;line-height:26.62px;color:#2b2b2b;">MY WORKLOG DETAILS</span>
<div class="a" style="left:2777px;top:988.8px;width:124px;height:44.5px;background:#3d8b62;border-radius:6px 0 0 6px;"></div>
<svg class="a" style="left:2792.6px;top:997.4px;" width="27" height="26" viewBox="0 0 27 26"><path d="M15.600 0.800L1.200 3.400v19.200l14.400 2.600z" fill="#fff"/><path d="M16.800 3.600h8.200a1.200 1.200 0 0 1 1.200 1.200v16.400a1.200 1.200 0 0 1-1.200 1.200h-8.200z" fill="#fff"/><path d="M16.800 7.300h9.400M16.800 11.100h9.400M16.800 14.900h9.400M16.800 18.700h9.400M21.200 3.600v18.800" stroke="#3d8b62" stroke-width="1.300"/><text x="8.4" y="18.8" text-anchor="middle" font-size="15.500" font-weight="700" fill="#3d8b62">X</text></svg>
<span class="t" style="left:2832px;letter-spacing:0.408px;top:1000.01px;font-size:22.67px;line-height:22.67px;color:#fff;-webkit-text-stroke:0.8px #fff;">Excel</span>
<div class="a" style="left:534.7px;top:1056.4px;width:2371.3px;height:48.1px;background:#f4f5f7;"></div>
<div class="a" style="left:534.7px;top:1055.9px;width:2371.3px;height:1px;background:#dfe1e6;"></div>
<div class="a" style="left:534.7px;top:1104px;width:2371.3px;height:1px;background:#dfe1e6;"></div>
<div class="a" style="left:534.7px;top:1153px;width:2371.3px;height:1px;background:#dfe1e6;"></div>
<div class="a" style="left:534.7px;top:1202px;width:2371.3px;height:1px;background:#dfe1e6;"></div>
<div class="a" style="left:534.7px;top:1251px;width:2371.3px;height:1px;background:#dfe1e6;"></div>
<div class="a" style="left:534.7px;top:1300px;width:2371.3px;height:1px;background:#dfe1e6;"></div>
<div class="a" style="left:534.2px;top:1056.4px;width:1px;height:245.6px;background:#dfe1e6;"></div>
<div class="a" style="left:775.9px;top:1056.4px;width:1px;height:245.6px;background:#dfe1e6;"></div>
<div class="a" style="left:1018.7px;top:1056.4px;width:1px;height:245.6px;background:#dfe1e6;"></div>
<div class="a" style="left:1504.1px;top:1056.4px;width:1px;height:245.6px;background:#dfe1e6;"></div>
<div class="a" style="left:1745.8px;top:1056.4px;width:1px;height:245.6px;background:#dfe1e6;"></div>
<div class="a" style="left:1939.9px;top:1056.4px;width:1px;height:245.6px;background:#dfe1e6;"></div>
<div class="a" style="left:2424.9px;top:1056.4px;width:1px;height:245.6px;background:#dfe1e6;"></div>
<span class="t" style="left:547.7px;letter-spacing:0.101px;top:1069.88px;font-size:21.63px;line-height:21.63px;color:#0f1c3a;-webkit-text-stroke:0.25px #0f1c3a;">Status</span>
<span class="t" style="left:789.9px;letter-spacing:-0.084px;top:1069.88px;font-size:21.63px;line-height:21.63px;color:#0f1c3a;-webkit-text-stroke:0.25px #0f1c3a;">Date</span>
<span class="t" style="left:1030.8px;letter-spacing:0.135px;top:1069.88px;font-size:21.63px;line-height:21.63px;color:#0f1c3a;-webkit-text-stroke:0.25px #0f1c3a;">Issue</span>
<span class="t" style="left:1516.4px;letter-spacing:0.410px;top:1069.88px;font-size:21.63px;line-height:21.63px;color:#0f1c3a;-webkit-text-stroke:0.25px #0f1c3a;">Category</span>
<span class="t" style="left:1760.5px;letter-spacing:0.048px;top:1069.88px;font-size:21.63px;line-height:21.63px;color:#0f1c3a;-webkit-text-stroke:0.25px #0f1c3a;">Time Spent</span>
<span class="t" style="left:1953px;letter-spacing:0.213px;top:1069.88px;font-size:21.63px;line-height:21.63px;color:#0f1c3a;-webkit-text-stroke:0.25px #0f1c3a;">Comment</span>
<span class="t" style="left:2638.5px;letter-spacing:0.083px;top:1069.88px;font-size:21.63px;line-height:21.63px;color:#0f1c3a;-webkit-text-stroke:0.25px #0f1c3a;">Actions</span>
<div class="a" style="left:543.2px;top:1114.1px;width:205.7px;height:29.8px;background:#e1eafc;border-radius:15px;"></div>
<svg class="a" style="left:561px;top:1125.4px;" width="7.2" height="7.2" viewBox="0 0 7.2 7.2"><circle cx="3.6" cy="3.6" r="3.5" fill="#3577f3"/></svg>
<span class="t" style="left:574.7px;letter-spacing:0.081px;top:1119.57px;font-size:19.97px;line-height:19.97px;color:#3577f3;">Pending Approval</span>
<span class="t" style="left:788px;letter-spacing:0.446px;top:1118.13px;font-size:21.63px;line-height:21.63px;color:#2b2b2b;">2025-05-26 15:05</span>
<span class="t" style="left:1028px;letter-spacing:-0.310px;top:1118.13px;font-size:21.63px;line-height:21.63px;color:#2b2b2b;">[BA-2] Dictionary Review</span>
<span class="t" style="left:1512px;letter-spacing:-0.099px;top:1118.13px;font-size:21.63px;line-height:21.63px;color:#2b2b2b;">Billable</span>
<span class="t" style="left:1756.24px;top:1118.13px;font-size:21.63px;line-height:21.63px;color:#2b2b2b;">8h</span>
<svg class="a" style="left:2556.6px;top:1116.4px;" width="26" height="24.6" viewBox="0 0 27 26.4"><path d="M18.800 3.000a3.300 3.300 0 0 1 4.700 4.700L8.200 23.000 1.800 24.600l1.600-6.400z" fill="none" stroke="#3577f3" stroke-width="2.800" stroke-linejoin="round"/><path d="M17.000 5.000l4.600 4.600" stroke="#3577f3" stroke-width="2.400"/></svg>
<span class="t" style="left:2594.4px;letter-spacing:-0.122px;top:1118.79px;font-size:23.5px;line-height:23.5px;color:#3577f3;-webkit-text-stroke:0.55px #3577f3;">Edit</span>
<svg class="a" style="left:2670.2px;top:1117.1px;" width="22.2" height="23" viewBox="0 0 22.2 23"><g fill="none" stroke="#c9372c" stroke-width="2.700" stroke-linecap="round" stroke-linejoin="round"><path d="M1.400 4.400h19.400"/><path d="M7.600 4.200a3.500 3.200 0 0 1 7.000 0"/><path d="M3.800 4.800v14.000a2.800 2.800 0 0 0 2.800 2.800h9.000a2.800 2.800 0 0 0 2.800-2.800V4.800"/><path d="M8.900 9.000v8.200M13.300 9.000v8.200"/></g></svg>
<span class="t" style="left:2705.7px;letter-spacing:0.188px;top:1118.79px;font-size:23.5px;line-height:23.5px;color:#c9372c;-webkit-text-stroke:0.55px #c9372c;">Delete</span>
<div class="a" style="left:543.2px;top:1163.1px;width:205.7px;height:29.8px;background:#e1eafc;border-radius:15px;"></div>
<svg class="a" style="left:561px;top:1174.4px;" width="7.2" height="7.2" viewBox="0 0 7.2 7.2"><circle cx="3.6" cy="3.6" r="3.5" fill="#3577f3"/></svg>
<span class="t" style="left:574.7px;letter-spacing:0.081px;top:1168.57px;font-size:19.97px;line-height:19.97px;color:#3577f3;">Pending Approval</span>
<span class="t" style="left:788px;letter-spacing:0.446px;top:1167.13px;font-size:21.63px;line-height:21.63px;color:#2b2b2b;">2025-05-27 15:05</span>
<span class="t" style="left:1028px;letter-spacing:-0.144px;top:1167.13px;font-size:21.63px;line-height:21.63px;color:#2b2b2b;">[BA-4] Test Course</span>
<span class="t" style="left:1512px;letter-spacing:-0.099px;top:1167.13px;font-size:21.63px;line-height:21.63px;color:#2b2b2b;">Billable</span>
<span class="t" style="left:1756.24px;top:1167.13px;font-size:21.63px;line-height:21.63px;color:#2b2b2b;">4h</span>
<svg class="a" style="left:2556.6px;top:1165.4px;" width="26" height="24.6" viewBox="0 0 27 26.4"><path d="M18.800 3.000a3.300 3.300 0 0 1 4.700 4.700L8.200 23.000 1.800 24.600l1.600-6.400z" fill="none" stroke="#3577f3" stroke-width="2.800" stroke-linejoin="round"/><path d="M17.000 5.000l4.600 4.600" stroke="#3577f3" stroke-width="2.400"/></svg>
<span class="t" style="left:2594.4px;letter-spacing:-0.122px;top:1167.79px;font-size:23.5px;line-height:23.5px;color:#3577f3;-webkit-text-stroke:0.55px #3577f3;">Edit</span>
<svg class="a" style="left:2670.2px;top:1166.1px;" width="22.2" height="23" viewBox="0 0 22.2 23"><g fill="none" stroke="#c9372c" stroke-width="2.700" stroke-linecap="round" stroke-linejoin="round"><path d="M1.400 4.400h19.400"/><path d="M7.600 4.200a3.500 3.200 0 0 1 7.000 0"/><path d="M3.800 4.800v14.000a2.800 2.800 0 0 0 2.800 2.800h9.000a2.800 2.800 0 0 0 2.800-2.800V4.800"/><path d="M8.900 9.000v8.200M13.300 9.000v8.200"/></g></svg>
<span class="t" style="left:2705.7px;letter-spacing:0.188px;top:1167.79px;font-size:23.5px;line-height:23.5px;color:#c9372c;-webkit-text-stroke:0.55px #c9372c;">Delete</span>
<div class="a" style="left:543.2px;top:1212.1px;width:205.7px;height:29.8px;background:#e1eafc;border-radius:15px;"></div>
<svg class="a" style="left:561px;top:1223.4px;" width="7.2" height="7.2" viewBox="0 0 7.2 7.2"><circle cx="3.6" cy="3.6" r="3.5" fill="#3577f3"/></svg>
<span class="t" style="left:574.7px;letter-spacing:0.081px;top:1217.57px;font-size:19.97px;line-height:19.97px;color:#3577f3;">Pending Approval</span>
<span class="t" style="left:788px;letter-spacing:0.446px;top:1216.13px;font-size:21.63px;line-height:21.63px;color:#2b2b2b;">2025-05-27 15:05</span>
<span class="t" style="left:1028px;letter-spacing:-0.360px;top:1216.13px;font-size:21.63px;line-height:21.63px;color:#2b2b2b;">[NMP-33] Epic One</span>
<span class="t" style="left:1512px;letter-spacing:-0.099px;top:1216.13px;font-size:21.63px;line-height:21.63px;color:#2b2b2b;">Billable</span>
<span class="t" style="left:1756.47px;top:1216.13px;font-size:21.63px;line-height:21.63px;color:#2b2b2b;">45m</span>
<svg class="a" style="left:2556.6px;top:1214.4px;" width="26" height="24.6" viewBox="0 0 27 26.4"><path d="M18.800 3.000a3.300 3.300 0 0 1 4.700 4.700L8.200 23.000 1.800 24.600l1.600-6.400z" fill="none" stroke="#3577f3" stroke-width="2.800" stroke-linejoin="round"/><path d="M17.000 5.000l4.600 4.600" stroke="#3577f3" stroke-width="2.400"/></svg>
<span class="t" style="left:2594.4px;letter-spacing:-0.122px;top:1216.79px;font-size:23.5px;line-height:23.5px;color:#3577f3;-webkit-text-stroke:0.55px #3577f3;">Edit</span>
<svg class="a" style="left:2670.2px;top:1215.1px;" width="22.2" height="23" viewBox="0 0 22.2 23"><g fill="none" stroke="#c9372c" stroke-width="2.700" stroke-linecap="round" stroke-linejoin="round"><path d="M1.400 4.400h19.400"/><path d="M7.600 4.200a3.500 3.200 0 0 1 7.000 0"/><path d="M3.800 4.800v14.000a2.800 2.800 0 0 0 2.800 2.800h9.000a2.800 2.800 0 0 0 2.800-2.800V4.800"/><path d="M8.900 9.000v8.200M13.300 9.000v8.200"/></g></svg>
<span class="t" style="left:2705.7px;letter-spacing:0.188px;top:1216.79px;font-size:23.5px;line-height:23.5px;color:#c9372c;-webkit-text-stroke:0.55px #c9372c;">Delete</span>
<div class="a" style="left:543.2px;top:1261.1px;width:205.7px;height:29.8px;background:#e1eafc;border-radius:15px;"></div>
<svg class="a" style="left:561px;top:1272.4px;" width="7.2" height="7.2" viewBox="0 0 7.2 7.2"><circle cx="3.6" cy="3.6" r="3.5" fill="#3577f3"/></svg>
<span class="t" style="left:574.7px;letter-spacing:0.081px;top:1266.57px;font-size:19.97px;line-height:19.97px;color:#3577f3;">Pending Approval</span>
<span class="t" style="left:788px;letter-spacing:0.446px;top:1265.13px;font-size:21.63px;line-height:21.63px;color:#2b2b2b;">2025-05-27 15:05</span>
<span class="t" style="left:1028px;letter-spacing:-0.350px;top:1265.13px;font-size:21.63px;line-height:21.63px;color:#2b2b2b;">[BA-3] Onboarding Email</span>
<span class="t" style="left:1512px;letter-spacing:-0.099px;top:1265.13px;font-size:21.63px;line-height:21.63px;color:#2b2b2b;">Billable</span>
<span class="t" style="left:1755.74px;top:1265.13px;font-size:21.63px;line-height:21.63px;color:#2b2b2b;">2h</span>
<svg class="a" style="left:2556.6px;top:1263.4px;" width="26" height="24.6" viewBox="0 0 27 26.4"><path d="M18.800 3.000a3.300 3.300 0 0 1 4.700 4.700L8.200 23.000 1.800 24.600l1.600-6.400z" fill="none" stroke="#3577f3" stroke-width="2.800" stroke-linejoin="round"/><path d="M17.000 5.000l4.600 4.600" stroke="#3577f3" stroke-width="2.400"/></svg>
<span class="t" style="left:2594.4px;letter-spacing:-0.122px;top:1265.79px;font-size:23.5px;line-height:23.5px;color:#3577f3;-webkit-text-stroke:0.55px #3577f3;">Edit</span>
<svg class="a" style="left:2670.2px;top:1264.1px;" width="22.2" height="23" viewBox="0 0 22.2 23"><g fill="none" stroke="#c9372c" stroke-width="2.700" stroke-linecap="round" stroke-linejoin="round"><path d="M1.400 4.400h19.400"/><path d="M7.600 4.200a3.500 3.200 0 0 1 7.000 0"/><path d="M3.800 4.800v14.000a2.800 2.800 0 0 0 2.800 2.800h9.000a2.800 2.800 0 0 0 2.800-2.800V4.800"/><path d="M8.900 9.000v8.200M13.300 9.000v8.200"/></g></svg>
<span class="t" style="left:2705.7px;letter-spacing:0.188px;top:1265.79px;font-size:23.5px;line-height:23.5px;color:#c9372c;-webkit-text-stroke:0.55px #c9372c;">Delete</span>
<div class="a" style="left:0px;top:1262px;width:2906px;height:40px;background:linear-gradient(to bottom, rgba(240,241,243,0), rgba(236,237,240,.6));"></div>
<div class="a" style="left:2px;top:3px;width:2895px;height:80px;border-radius:3px;border:6px solid #e4474c;box-shadow:0 2px 5px rgba(0,0,0,.16);"></div>
<div class="a" style="left:1px;top:87px;width:513.5px;height:1197px;border-radius:3px;border:6px solid #ee8f33;box-shadow:0 2px 5px rgba(0,0,0,.16);"></div>
<div class="a" style="left:519px;top:91px;width:462px;height:381px;border-radius:3px;border:6px solid #6fd063;box-shadow:0 2px 5px rgba(0,0,0,.16);"></div>
<div class="a" style="left:987.5px;top:91px;width:1909px;height:377px;border-radius:3px;border:6px solid #3478f6;box-shadow:0 2px 5px rgba(0,0,0,.16);"></div>
<div class="a" style="left:519.5px;top:476px;width:2377.5px;height:337px;border-radius:3px;border:6px solid #8250f5;box-shadow:0 2px 5px rgba(0,0,0,.16);"></div>
<div class="a" style="left:518.5px;top:821px;width:2381.5px;height:146px;border-radius:3px;border:6px solid #e8426a;box-shadow:0 2px 5px rgba(0,0,0,.16);"></div>
<div class="a" style="left:521px;top:974px;width:2383px;height:311px;border-radius:3px;border:6px solid #60c9bd;box-shadow:0 2px 5px rgba(0,0,0,.16);"></div>
<span class="t" style="left:185.4px;letter-spacing:0.002px;top:110.19px;font-size:26.83px;line-height:26.83px;color:#ee8f33;font-weight:700;text-shadow:0 3px 5px rgba(0,0,0,.17);">Issue Panel</span>
<svg class="a" style="left:0px;top:0px;pointer-events:none;" width="2906" height="1302" viewBox="0 0 2906 1302"><path d="M182.8 148.6L325.6 147.2" stroke="#ee8f33" stroke-width="6.2" stroke-linecap="round" style="filter:drop-shadow(0 2px 2px rgba(0,0,0,.2))"/></svg>
<span class="t" style="left:689.6px;letter-spacing:0.119px;top:102.09px;font-size:26.83px;line-height:26.83px;color:#6fd063;font-weight:700;text-shadow:0 3px 5px rgba(0,0,0,.17);">Pie Chart</span>
<svg class="a" style="left:0px;top:0px;pointer-events:none;" width="2906" height="1302" viewBox="0 0 2906 1302"><path d="M684.4 139.4L811.4 139.2" stroke="#6fd063" stroke-width="6.2" stroke-linecap="round" style="filter:drop-shadow(0 2px 2px rgba(0,0,0,.2))"/></svg>
<span class="t" style="left:1581.5px;letter-spacing:-0.328px;top:114.51px;font-size:27.04px;line-height:27.04px;color:#3478f6;font-weight:700;text-shadow:0 3px 5px rgba(0,0,0,.17);">Requierd VS Logged Hours Day By Day</span>
<svg class="a" style="left:0px;top:0px;pointer-events:none;" width="2906" height="1302" viewBox="0 0 2906 1302"><path d="M1583 155L2088 155" stroke="#3478f6" stroke-width="6.2" stroke-linecap="round" style="filter:drop-shadow(0 2px 2px rgba(0,0,0,.2))"/></svg>
<span class="t" style="left:1447.2px;letter-spacing:-0.048px;top:485.91px;font-size:27.04px;line-height:27.04px;color:#8250f5;font-weight:700;text-shadow:0 3px 5px rgba(0,0,0,.17);">Individual Timeline Panel</span>
<svg class="a" style="left:0px;top:0px;pointer-events:none;" width="2906" height="1302" viewBox="0 0 2906 1302"><path d="M1445.3 525L1771.7 523.6" stroke="#8250f5" stroke-width="6.2" stroke-linecap="round" style="filter:drop-shadow(0 2px 2px rgba(0,0,0,.2))"/></svg>
<span class="t" style="left:1460.7px;letter-spacing:-0.222px;top:830.91px;font-size:27.04px;line-height:27.04px;color:#e8426a;font-weight:700;text-shadow:0 3px 5px rgba(0,0,0,.17);">Logged Hours Table</span>
<svg class="a" style="left:0px;top:0px;pointer-events:none;" width="2906" height="1302" viewBox="0 0 2906 1302"><path d="M1458 868.8L1719.6 867.8" stroke="#e8426a" stroke-width="6.2" stroke-linecap="round" style="filter:drop-shadow(0 2px 2px rgba(0,0,0,.2))"/></svg>
<span class="t" style="left:1435.8px;letter-spacing:-0.039px;top:987.91px;font-size:27.04px;line-height:27.04px;color:#60c9bd;font-weight:700;text-shadow:0 3px 5px rgba(0,0,0,.17);">My Worklogs Details Table</span>
<svg class="a" style="left:0px;top:0px;pointer-events:none;" width="2906" height="1302" viewBox="0 0 2906 1302"><path d="M1434 1025.6L1766.6 1024.2" stroke="#60c9bd" stroke-width="6.2" stroke-linecap="round" style="filter:drop-shadow(0 2px 2px rgba(0,0,0,.2))"/></svg>
<svg class="a" style="left:0px;top:0px;pointer-events:none;" width="2906" height="1302" viewBox="0 0 2906 1302"><path d="M2557.5 848.2Q2556 850.6 2558.4 852.2L2660.5 874.6 2651.5 887.4 2697.6 874.8 2659.2 847.6 2655.2 859.8 2560.4 848z" fill="#e8426a" stroke="#e8426a" stroke-width="3" stroke-linejoin="round" style="filter:drop-shadow(0 2px 3px rgba(0,0,0,.22))"/></svg>
</div></body></html>
